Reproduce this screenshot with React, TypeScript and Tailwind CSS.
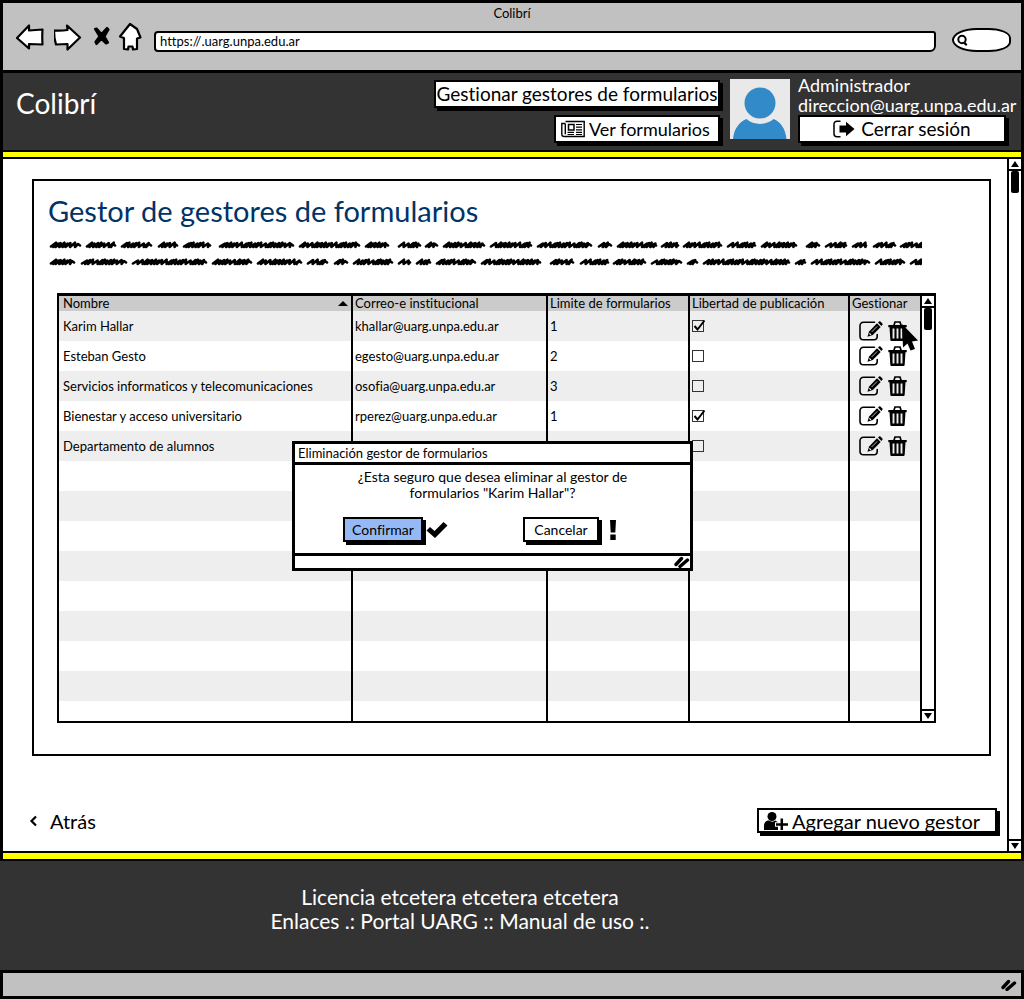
import React from "react";

type Manager = {
  name: string;
  email: string;
  limit: number;
  free: boolean;
  hovered?: boolean;
};

const managers: Manager[] = [
  { name: "Karim Hallar", email: "khallar@uarg.unpa.edu.ar", limit: 1, free: true, hovered: true },
  { name: "Esteban Gesto", email: "egesto@uarg.unpa.edu.ar", limit: 2, free: false },
  { name: "Servicios informaticos y telecomunicaciones", email: "osofia@uarg.unpa.edu.ar", limit: 3, free: false },
  { name: "Bienestar y acceso universitario", email: "rperez@uarg.unpa.edu.ar", limit: 1, free: true },
  { name: "Departamento de alumnos", email: "", limit: 1, free: false },
];

const emptyRows = [5, 6, 7, 8, 9, 10, 11, 12];

// Start and end of every scribbled word, one list per line.
const scribbleLines: [number, number][][] = [
  [[2, 33], [38, 68], [73, 104], [110, 130], [135, 163], [171, 246], [251, 312], [317, 341], [350, 373], [377, 390], [395, 437], [442, 484], [489, 544], [550, 564], [569, 609], [613, 631], [635, 674], [679, 708], [713, 749], [758, 772], [777, 799], [804, 819], [825, 848], [852, 880]],
  [[2, 27], [33, 79], [84, 159], [164, 204], [209, 254], [259, 280], [286, 300], [305, 345], [350, 363], [368, 383], [388, 428], [433, 493], [502, 526], [532, 561], [565, 598], [603, 634], [639, 650], [655, 742], [747, 758], [763, 822], [827, 857], [862, 882]],
];

function scribble(from: number, to: number, y: number): string {
  let x = from + 1;
  let d = `M${x} ${y + 1.5}`;
  let i = from;
  while (x < to - 6) {
    const up = 1.5 + ((i * 7) % 3) * 0.4;
    const step = [4.6, 3.2, 2.4, 5, 2.8, 3.8, 2.2][(i * 3) % 7];
    d += `L${(x + 5).toFixed(1)} ${y - up}L${(x + step).toFixed(1)} ${y + 2}`;
    x += step;
    i += 1;
  }
  return d + `L${to - 3} ${y - 1}L${to - 1} ${y + 0.5}`;
}

function Scribbles() {
  return (
    <svg viewBox="0 0 874 32" className="mt-2 h-8 w-[874px] max-w-full" aria-hidden="true">
      {scribbleLines.map((line, row) => (
        <path
          key={row}
          d={line.map(([a, b]) => scribble(a, b, row * 17 + 8)).join("")}
          fill="none"
          stroke="#000"
          strokeWidth="2.6"
          strokeLinejoin="round"
          strokeLinecap="round"
        />
      ))}
    </svg>
  );
}

function EditIcon() {
  return (
    <svg viewBox="0 0 24 20" className="h-5 w-6" aria-hidden="true">
      <path d="M15.5 1.2H4.6C2.4 1.2 1 2.7 1 4.8v10.4c0 2.1 1.4 3.6 3.6 3.6h10.2c2.2 0 3.400-1.400 3.400-3.600v-1.600" fill="none" stroke="#000" strokeWidth="1.6" strokeLinecap="round" />
      <path d="M18 2.300l3.700 3.600L13.800 14l-5.300 1.700 1.600-5.200z" />
      <path d="M19 1.500l1.100-1c.4-.4.9-.4 1.300 0l2 2c.4.4.4.9 0 1.300l-1 1.100z" />
      <path d="M12.600 11l5.600-5.600" stroke="#fff" strokeWidth="0.7" />
      <path d="M10.400 12.300l1.500 1.500" stroke="#fff" strokeWidth="1.100" />
    </svg>
  );
}

function TrashIcon() {
  return (
    <svg viewBox="0 0 20 20" className="h-5 w-5" aria-hidden="true">
      <path d="M6 4.200L7 1h5l1 3.200" fill="none" stroke="#000" strokeWidth="1.700" />
      <path d="M.3 4h18.400v2.200H.3z" />
      <path d="M1.500 6h16l-.8 12.400c0 .9-.7 1.600-1.600 1.600H3.900c-.9 0-1.600-.7-1.600-1.600z" />
      <path d="M5.500 7.500v10M9.500 7.500v10M13.500 7.500v10" stroke="#eee" strokeWidth="1.900" />
    </svg>
  );
}

function ArrowIcon({ down = false }: { down?: boolean }) {
  return (
    <svg viewBox="0 0 8 6" className="h-1.5 w-2" aria-hidden="true">
      <path d={down ? "M0 0h8L4 6z" : "M4 0l4 6H0z"} />
    </svg>
  );
}

function SortIcon() {
  return (
    <svg viewBox="0 0 10 5" className="h-[5px] w-2.5" aria-hidden="true">
      <path d="M5 0l5 5H0z" />
    </svg>
  );
}

function ScrollBar() {
  return (
    <div className="flex w-3.5 shrink-0 flex-col border-l-2 border-black bg-white">
      <button type="button" aria-label="Subir" className="flex h-3 items-center justify-center border-b-2 border-black">
        <ArrowIcon />
      </button>
      <div className="mx-auto h-[22px] w-2 rounded-xs bg-black" />
      <button type="button" aria-label="Bajar" className="mt-auto flex h-3 items-center justify-center border-t-2 border-black">
        <ArrowIcon down />
      </button>
    </div>
  );
}

function ResizeGrip() {
  return (
    <svg viewBox="0 0 16 12" className="h-3 w-4" aria-hidden="true">
      <path d="M2 8.500L7.500 2.500M6 10.500l7.500-6.500" stroke="#000" strokeWidth="3.400" strokeLinecap="round" />
    </svg>
  );
}

function SketchButton({ children, className = "" }: { children: React.ReactNode; className?: string }) {
  return (
    <button
      type="button"
      className={`flex items-center whitespace-nowrap border-2 border-black shadow-[3px_3px_0_#000] ${className}`}
    >
      {children}
    </button>
  );
}

function BrowserBar() {
  return (
    <div className="border-b-[3px] border-black bg-[#c1c1c1] pb-[18px]">
      <div className="h-[21px] text-center text-[13px] leading-5">Colibrí</div>
      <div className="flex items-end pl-[13px] pr-2.5">
        <nav className="flex items-center gap-2.5" aria-label="Navegador">
          <button type="button" aria-label="Atrás">
            <svg viewBox="0 0 28 28" className="block size-7">
              <path d="M1 14L13 1.500V6.500L26.500 5.500Q26 13 26.500 20.500L13 20V24.500Z" fill="#fff" stroke="#000" strokeWidth="2.200" strokeLinejoin="round" />
            </svg>
          </button>
          <button type="button" aria-label="Adelante">
            <svg viewBox="0 0 28 28" className="block size-7">
              <path d="M0 6.500Q7 7 13.500 6L13 1.500L26 13.500L13.500 25.500V20L2 20.500L0.500 14Z" fill="#fff" stroke="#000" strokeWidth="2.200" strokeLinejoin="round" overflow="visible" />
            </svg>
          </button>
          <button type="button" aria-label="Detener">
            <svg viewBox="0 0 20 28" className="block h-7 w-5">
              <path d="M4.500 4.500L9.500 10L15 4L16.500 5.500L12.500 12.500L16 18.500L14 19.500L9.500 15L4.500 20L3.500 18L7.500 12.500L3 5Z" stroke="#000" strokeWidth="2.200" strokeLinejoin="round" />
            </svg>
          </button>
          <button type="button" aria-label="Inicio">
            <svg viewBox="0 0 22 28" className="block h-7 w-[22px] overflow-visible">
              <path d="M8 0L-2 12.500L2 14L2 25L6 25.500L6.500 22.500H10.500L11 25.500L15 25V14.500L18.500 13.500L15 5Z" fill="#fff" stroke="#000" strokeWidth="2.200" strokeLinejoin="round" />
            </svg>
          </button>
        </nav>
        <input
          type="text"
          aria-label="Dirección"
          defaultValue="https://.uarg.unpa.edu.ar"
          className="ml-2.5 h-[21px] min-w-0 flex-1 rounded-[4px_3px_6px_4px] border-2 border-black bg-white px-1 pb-0.5 text-[13px]"
        />
        <label className="ml-4 flex h-6 w-[59px] items-center rounded-[50%_45%_45%_50%/60%_50%_50%_60%] border-2 border-black bg-white pl-0.5">
          <svg viewBox="0 0 12 12" className="size-3 shrink-0" aria-hidden="true">
            <path d="M8 8.500L10 10.500" stroke="#000" strokeWidth="2.400" strokeLinecap="round" />
            <circle cx="6" cy="5.500" r="3.700" fill="#fff" stroke="#000" strokeWidth="2" />
          </svg>
          <input type="search" aria-label="Buscar" className="w-full min-w-0 bg-transparent text-[13px] outline-none" />
        </label>
      </div>
    </div>
  );
}

function Header() {
  return (
    <header className="flex items-start bg-[#333] pb-[7px] pl-[13px] pt-0.5">
      <div className="mt-2.5 text-[28px] leading-9 text-white">Colibrí</div>
      <div className="ml-auto mt-[5px] flex flex-col items-end gap-[7px]">
        <SketchButton className="h-7 w-[286px] justify-center bg-white text-[19px]">Gestionar gestores de formularios</SketchButton>
        <SketchButton className="h-7 w-[166px] gap-1 bg-white pl-[5px] text-[18px]">
          <svg viewBox="0 0 24 18" className="h-[18px] w-6" fill="none" stroke="#000" aria-hidden="true">
            <path d="M4.500 1.500h18.700v15H3.200C1.700 16.500.8 15.500.8 14.200V3.500h3.400M4.300 3.500v10.700" strokeWidth="1.400" />
            <path d="M7.500 4.500h5.500v5.500H7.500z" strokeWidth="1.500" />
            <path d="M15 4.500h6M15 7.200h6M15 9.900h6M6.500 12.300h6.500M15 12.300h6M6.500 14.500h6.500M15 14.500h6" strokeWidth="1.200" />
          </svg>
          Ver formularios
        </SketchButton>
      </div>
      <svg viewBox="0 0 60 60" className="ml-2.5 mt-1 size-[60px] shrink-0" role="img" aria-label="Foto de perfil">
        <path d="M0 0h60v60H0z" fill="#e9e9e9" />
        <circle cx="30" cy="24" r="15.500" fill="#328ac9" />
        <path d="M3 60C4 50 9 43 16.500 40C24 46.500 36 46.500 43.500 40C51 43 55.500 50 56.500 60Z" fill="#328ac9" />
      </svg>
      <div className="ml-2 w-[223px] shrink-0 text-[18px] leading-5 text-white">
        <div>Administrador</div>
        <div className="whitespace-nowrap">direccion@uarg.unpa.edu.ar</div>
        <SketchButton className="h-7 w-[208px] justify-center gap-1.5 bg-white text-[19px] text-black">
          <svg viewBox="0 0 22 18" className="h-[18px] w-[22px]" aria-hidden="true">
            <path d="M7.500 1.200H4C2.200 1.200 1 2.400 1 4.200v9.600c0 1.800 1.200 3 3 3h3.500" fill="none" stroke="#000" strokeWidth="1.500" />
            <path d="M6.500 5.500H13V1.800L21.500 9l-8.500 7.200V12.500H6.500z" />
          </svg>
          Cerrar sesión
        </SketchButton>
      </div>
    </header>
  );
}

function ConfirmDialog() {
  return (
    <div role="dialog" aria-label="Eliminación gestor de formularios" className="absolute left-[233px] top-[145px] w-[401px] border-[3px] border-black bg-white">
      <div className="border-b-[3px] border-black px-[3px] text-[13px] leading-[18px]">Eliminación gestor de formularios</div>
      <p className="mx-auto mt-1 w-[300px] text-center text-[14px] leading-4">
        ¿Esta seguro que desea eliminar al gestor de formularios "Karim Hallar"?
      </p>
      <div className="mb-[11px] mt-4 flex items-center pl-12 text-[14px]">
        <SketchButton className="h-[25px] w-20 justify-center bg-[#95b9f4]">Confirmar</SketchButton>
        <svg viewBox="0 0 22 18" className="ml-[3px] h-[18px] w-[22px]" aria-hidden="true">
          <path d="M0.500 9.500L4 6L8.500 10L17.500 1L21.500 4.500L9 17Z" />
        </svg>
        <SketchButton className="ml-[75px] h-[25px] w-[76px] justify-center bg-white">Cancelar</SketchButton>
        <svg viewBox="0 0 8 20" className="ml-2.5 h-5 w-2" aria-hidden="true">
          <path d="M1 0h6l-.7 12.500H1.700zM1.300 14.500h5.400V20H1.300z" />
        </svg>
      </div>
      <div className="flex h-[15px] items-center justify-end border-t-[3px] border-black">
        <ResizeGrip />
      </div>
    </div>
  );
}

function ManagersTable() {
  return (
    <div className="relative ml-[9px] mr-[53px] mt-6 flex border-2 border-t-[3px] border-black">
      <table className="w-full table-fixed border-collapse text-left text-[13px] leading-[15px]">
        <colgroup>
          <col />
          <col className="w-[195px]" />
          <col className="w-[142px]" />
          <col className="w-[160px]" />
          <col className="w-[71px]" />
        </colgroup>
        <thead>
          <tr className="bg-[#cbcbcb] whitespace-nowrap">
            <th className="p-0 pl-1 font-normal">
              <span className="flex items-center justify-between pr-[3px]">
                Nombre
                <SortIcon />
              </span>
            </th>
            <th className="border-l-2 border-black p-0 pl-0.5 font-normal">Correo-e institucional</th>
            <th className="border-l-2 border-black p-0 pl-0.5 font-normal">Limite de formularios</th>
            <th className="border-l-2 border-black p-0 pl-0.5 font-normal">Libertad de publicación</th>
            <th className="border-l-2 border-black p-0 pl-0.5 font-normal">Gestionar</th>
          </tr>
        </thead>
        <tbody>
          {managers.map((m) => (
            <tr key={m.name} className="h-[30px] odd:bg-[#eee]">
              <td className="p-0 pl-1">{m.name}</td>
              <td className="border-l-2 border-black p-0 pl-0.5">{m.email}</td>
              <td className="border-l-2 border-black p-0 pl-0.5">{m.limit}</td>
              <td className="border-l-2 border-black p-0 pl-0.5">
                <label className="relative block w-3.5">
                  <input
                    type="checkbox"
                    defaultChecked={m.free}
                    aria-label={`Libertad de publicación de ${m.name}`}
                    className="peer block size-3 appearance-none border border-[#333]"
                  />
                  <svg viewBox="0 0 14 14" className="pointer-events-none absolute left-0 top-[-1px] hidden size-3.5 peer-checked:block" aria-hidden="true">
                    <path d="M2.500 7L5.500 10.500L12.500 1.500" fill="none" stroke="#000" strokeWidth="2" />
                  </svg>
                </label>
              </td>
              <td className="border-l-2 border-black p-0">
                <div className={`relative flex h-[30px] gap-[5px] pl-[9px] ${m.hovered ? "items-end" : "items-center"}`}>
                  <button type="button" aria-label={`Editar ${m.name}`}>
                    <EditIcon />
                  </button>
                  <button type="button" aria-label={`Eliminar ${m.name}`}>
                    <TrashIcon />
                  </button>
                  {m.hovered && (
                    <svg viewBox="0 0 18 28" className="pointer-events-none absolute left-[51px] top-[13px] h-7 w-[18px]" aria-hidden="true">
                      <path d="M1 0L17 16.500L11 17.500L14 25L9.500 26.500L6.500 19.500L2 23.500Z" />
                    </svg>
                  )}
                </div>
              </td>
            </tr>
          ))}
          {emptyRows.map((n) => (
            <tr key={n} className="h-[30px] odd:bg-[#eee]">
              <td className="p-0" />
              <td className="border-l-2 border-black p-0" />
              <td className="border-l-2 border-black p-0" />
              <td className="border-l-2 border-black p-0" />
              <td className="border-l-2 border-black p-0" />
            </tr>
          ))}
          <tr className="h-5">
            <td className="p-0" />
            <td className="border-l-2 border-black p-0" />
            <td className="border-l-2 border-black p-0" />
            <td className="border-l-2 border-black p-0" />
            <td className="border-l-2 border-black p-0" />
          </tr>
        </tbody>
      </table>
      <ScrollBar />
      <ConfirmDialog />
    </div>
  );
}

export default function App() {
  return (
    <div className="flex min-h-screen flex-col border-[3px] border-black bg-white font-['Lato','Open_Sans',sans-serif] text-black [font-variant-ligatures:none]">
      <BrowserBar />
      <Header />
      <div className="h-[9px] border-y-2 border-black bg-[#ffff00]" />
      <div className="flex flex-1">
        <main className="flex min-w-0 flex-1 flex-col pb-[18px] pl-[29px] pr-2.5 pt-5">
          <section className="mr-1.5 border-2 border-black pb-[31px] pl-3.5 pt-3">
            <h1 className="text-[29px] leading-9 text-[#003366]">Gestor de gestores de formularios</h1>
            <Scribbles />
            <ManagersTable />
          </section>
          <div className="mt-auto flex items-center justify-between text-[20px] leading-6">
            <a href="#" className="flex items-center gap-3.5">
              <svg viewBox="0 0 8 12" className="-ml-1 h-3 w-2 overflow-visible" fill="none" aria-hidden="true">
                <path d="M8 1.500L3.500 6L8 10.500" stroke="#000" strokeWidth="2.200" />
              </svg>
              Atrás
            </a>
            <SketchButton className="h-[25px] w-[240px] gap-1 bg-white pl-[5px] leading-5">
              <svg viewBox="0 0 24 18" className="h-[18px] w-6" aria-hidden="true">
                <circle cx="8" cy="4.500" r="4.500" />
                <path d="M0 18v-4C0 10.500 2 8.500 5 8.500c2 1.500 4.500 1.500 6.500 0l2.500 2V18z" />
                <path d="M11 12.500h13M17.800 6.500V18" stroke="#fff" strokeWidth="4.500" />
                <path d="M12 12.500h12M17.800 6.500V18" stroke="#000" strokeWidth="2.500" />
              </svg>
              Agregar nuevo gestor
            </SketchButton>
          </div>
        </main>
        <ScrollBar />
      </div>
      <div className="h-2.5 border-y-2 border-black bg-[#ffff00]" />
      <footer className="-mx-[3px] bg-[#333] pb-[37px] pr-[104px] pt-6 text-center text-[21px] leading-6 text-white">
        <p>Licencia etcetera etcetera etcetera</p>
        <p>Enlaces .: Portal UARG :: Manual de uso :.</p>
      </footer>
      <div className="flex h-[26px] items-center justify-end border-t-[3px] border-black bg-[#c1c1c1] pr-1">
        <ResizeGrip />
      </div>
    </div>
  );
}
